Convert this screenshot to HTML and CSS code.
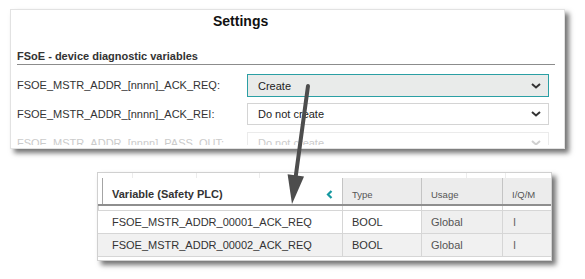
FILE: index.html
```html
<!DOCTYPE html>
<html lang="en">
<head>
  <meta charset="UTF-8">
  <title>FSoE settings</title>
  <link rel="stylesheet" href="styles.css">
</head>
<body>
  <div class="canvas">

    <div class="panel settings">
      <div class="settings-body">
        <div class="settings-title">Settings</div>
        <div class="section-head">FSoE - device diagnostic variables</div>

        <div class="field">
          <span class="field-label">FSOE_MSTR_ADDR_[nnnn]_ACK_REQ:</span>
          <div class="select focused">
            <span>Create</span>
            <svg class="chev" width="10" height="6" viewBox="0 0 10 6"><polyline points="1,1 5,4.5 9,1"/></svg>
          </div>
        </div>

        <div class="field">
          <span class="field-label">FSOE_MSTR_ADDR_[nnnn]_ACK_REI:</span>
          <div class="select">
            <span>Do not create</span>
            <svg class="chev" width="10" height="6" viewBox="0 0 10 6"><polyline points="1,1 5,4.5 9,1"/></svg>
          </div>
        </div>

        <div class="field faded">
          <span class="field-label">FSOE_MSTR_ADDR_[nnnn]_PASS_OUT:</span>
          <div class="select">
            <span>Do not create</span>
            <svg class="chev" width="10" height="6" viewBox="0 0 10 6"><polyline points="1,1 5,4.5 9,1"/></svg>
          </div>
        </div>
      </div>
    </div>

    <div class="panel vars">
      <div class="ticks">
        <span style="width:35px"></span>
        <span style="width:64px"></span>
        <span style="width:63px"></span>
        <span style="width:207px"></span>
        <span style="width:39px"></span>
      </div>

      <div class="vars-row vars-head">
        <div class="cell var-cell">
          Variable (Safety PLC)
          <svg class="collapse" width="7" height="9" viewBox="0 0 7 9"><polyline points="5.5,1 2,4.5 5.5,8"/></svg>
        </div>
        <div class="cell">Type</div>
        <div class="cell">Usage</div>
        <div class="cell">I/Q/M</div>
      </div>

      <div class="vars-row vars-gap">
        <div class="cell"></div>
        <div class="cell"></div>
        <div class="cell"></div>
        <div class="cell"></div>
      </div>

      <div class="vars-row">
        <div class="cell var-cell">FSOE_MSTR_ADDR_00001_ACK_REQ</div>
        <div class="cell type-cell">BOOL</div>
        <div class="cell ro">Global</div>
        <div class="cell ro iqm">I</div>
      </div>

      <div class="vars-row alt">
        <div class="cell var-cell">FSOE_MSTR_ADDR_00002_ACK_REQ</div>
        <div class="cell type-cell">BOOL</div>
        <div class="cell ro">Global</div>
        <div class="cell ro iqm">I</div>
      </div>
    </div>

    <svg class="callout-arrow" width="585" height="279" viewBox="0 0 585 279">
      <line x1="308" y1="86" x2="295.5" y2="178" stroke="#4d4d4d" stroke-width="4" stroke-linecap="round"/>
      <polygon points="292,204 287.6,174.2 304,176.4" fill="#4d4d4d"/>
    </svg>
  </div>
</body>
</html>
```

FILE: styles.css
```css
body {
  margin: 0;
  background: #fff;
  color: #333;
  font-family: "Liberation Sans", Arial, sans-serif;
}

.canvas {
  position: relative;
  width: 585px;
  height: 279px;
  overflow: hidden;
}

.panel {
  box-sizing: border-box;
  background: #fff;
  border: 1px solid #e2e2e2;
  box-shadow: 4px 4px 5px rgba(0, 0, 0, 0.55);
}

/* settings window */

.settings {
  width: 555px;
  height: 140px;
  margin: 9px 0 0 10px;
  padding: 0 0 3px 6px;
}

.settings-body {
  height: 135px;
  overflow: hidden;
}

.settings-title {
  padding: 1px 0 0 196px;
  font-size: 14px;
  font-weight: bold;
  line-height: 20px;
  color: #111;
}

.section-head {
  margin: 17px 9px 0 0;
  font-size: 11px;
  font-weight: bold;
  line-height: 16px;
  border-bottom: 1px solid #8c8c8c;
}

.field {
  display: flex;
  align-items: center;
  margin-top: 6px;
  font-size: 11px;
}

.section-head + .field {
  margin-top: 9px;
}

.field-label {
  width: 230px;
}

.select {
  box-sizing: border-box;
  width: 302px;
  height: 22px;
  display: flex;
  align-items: center;
  justify-content: space-between;
  padding: 0 7px 0 10px;
  border: 1px solid #d4d4d4;
  color: #222;
}

.select.focused {
  height: 23px;
  background: #e9ebea;
  border-color: #2b9fa4;
}

.chev polyline {
  fill: none;
  stroke: #333;
  stroke-width: 2;
}

.field + .field {
  margin-top: 7px;
}

.select.focused {
  margin-bottom: -1px;
}

.field.faded {
  color: #cbcbcb;
}

.field.faded .select {
  border-color: #ebebeb;
  color: #cbcbcb;
}

.field.faded .chev polyline {
  stroke: #d0d0d0;
}

/* variable table */

.vars {
  width: 455px;
  margin: 23px 0 0 97px;
  padding-bottom: 3px;
  border-color: #d0d0d0;
}

.ticks {
  height: 5px;
  display: flex;
}

.ticks span {
  box-sizing: border-box;
  border-right: 1px solid #ececec;
}

.vars-row {
  display: grid;
  grid-template-columns: 244px 79px 81px 49px;
  height: 22px;
  border-bottom: 1px solid #d6d6d6;
  font-size: 11px;
}

.cell {
  display: flex;
  align-items: center;
  padding-left: 9px;
  border-left: 1px solid #d6d6d6;
  color: #333;
}

.var-cell {
  padding-left: 14px;
  border-left: none;
}

.vars-head {
  height: 26px;
  border-bottom: 2px solid #8e8e8e;
}

.vars-head .cell {
  padding-top: 6px;
  background: #ececec;
  border-left-color: #c4c4c4;
  font-size: 9.5px;
  color: #555;
}

.vars-head .var-cell {
  margin-left: 4px;
  padding-left: 9px;
  background: #fff;
  border-left: 1px solid #a4a4a4;
  font-size: 11px;
  font-weight: bold;
  color: #333;
}

.collapse {
  margin-left: auto;
  margin-right: 9px;
}

.collapse polyline {
  fill: none;
  stroke: #1598a0;
  stroke-width: 2.2;
}

.vars-gap {
  height: 4px;
}

.vars-gap .var-cell {
  border-left: none;
}

.ro {
  background: #efefef;
  color: #555;
}

.iqm {
  padding-left: 10px;
  color: #666;
}

.vars-row.alt .cell {
  background: #f1f1f1;
}

.callout-arrow {
  position: absolute;
  left: 0;
  top: 0;
  pointer-events: none;
}
```
